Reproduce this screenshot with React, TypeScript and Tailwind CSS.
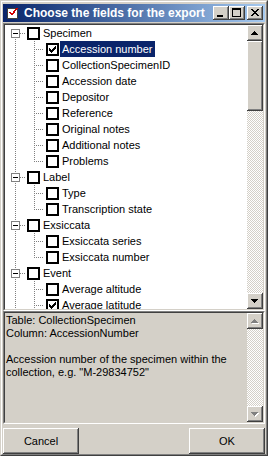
import React from "react";

const raised =
  "shadow-[inset_-1px_-1px_0_#404040,inset_1px_1px_0_#ffffff,inset_-2px_-2px_0_#808080,inset_2px_2px_0_#d4d0c8]";
const checker =
  "bg-[conic-gradient(#ffffff_25%,#d4d0c8_0_50%,#ffffff_0_75%,#d4d0c8_0)] bg-[length:2px_2px]";

type Leaf = { label: string; checked?: boolean; selected?: boolean };
type Node = { label: string; checked?: boolean; selected?: boolean; children: Leaf[] };

const tree: Node[] = [
  {
    label: "Specimen",
    children: [
      { label: "Accession number", checked: true, selected: true },
      { label: "CollectionSpecimenID" },
      { label: "Accession date" },
      { label: "Depositor" },
      { label: "Reference" },
      { label: "Original notes" },
      { label: "Additional notes" },
      { label: "Problems" },
    ],
  },
  { label: "Label", children: [{ label: "Type" }, { label: "Transcription state" }] },
  { label: "Exsiccata", children: [{ label: "Exsiccata series" }, { label: "Exsiccata number" }] },
  {
    label: "Event",
    children: [{ label: "Average altitude" }, { label: "Average latitude", checked: true }],
  },
];

const dot = { stroke: "#808080", strokeWidth: 1, strokeDasharray: "1 1" } as const;

function RootCell({ first }: { first: boolean }) {
  return (
    <svg width="19" height="16" className="shrink-0" shapeRendering="crispEdges">
      <line x1="9.5" y1={first ? 8 : 0} x2="9.5" y2="16" {...dot} />
      <line x1="14" y1="8.5" x2="19" y2="8.5" {...dot} />
      <rect x="5.5" y="4.5" width="8" height="8" fill="#ffffff" stroke="#808080" />
      <rect x="7" y="8" width="5" height="1" fill="#000000" />
    </svg>
  );
}

function ContCell() {
  return (
    <svg width="19" height="16" className="shrink-0" shapeRendering="crispEdges">
      <line x1="9.5" y1="0" x2="9.5" y2="16" {...dot} />
    </svg>
  );
}

function ChildCell({ last }: { last: boolean }) {
  return (
    <svg width="19" height="16" className="shrink-0" shapeRendering="crispEdges">
      <line x1="9.5" y1="0" x2="9.5" y2={last ? 9 : 16} {...dot} />
      <line x1="11" y1="8.5" x2="19" y2="8.5" {...dot} />
    </svg>
  );
}

function CheckBox({ checked }: { checked?: boolean }) {
  return (
    <div className="ml-[2px] w-[13px] h-[13px] shrink-0 border-2 border-black bg-white flex items-center justify-center">
      {checked && (
        <svg width="7" height="7" viewBox="0 0 7 7" shapeRendering="crispEdges">
          <path
            d="M6 0h1v1h-1z M5 1h2v1h-2z M0 2h1v1h-1z M4 2h3v1h-3z M0 3h2v1h-2z M3 3h3v1h-3z M0 4h5v1h-5z M1 5h3v1h-3z M2 6h1v1h-1z"
            fill="#000"
          />
        </svg>
      )}
    </div>
  );
}

function Label({ text, selected }: { text: string; selected?: boolean }) {
  return (
    <span
      className={
        selected
          ? "ml-[1px] px-[2px] h-[16px] leading-[16px] whitespace-nowrap bg-[#0a246a] text-white"
          : "ml-[1px] px-[2px] h-[16px] leading-[16px] whitespace-nowrap text-black"
      }
    >
      {text}
    </span>
  );
}

function Arrow({ dir, disabled }: { dir: "up" | "down"; disabled?: boolean }) {
  const up = "M3 0h1v1h-1z M2 1h3v1h-3z M1 2h5v1h-5z M0 3h7v1h-7z";
  const down = "M0 0h7v1h-7z M1 1h5v1h-5z M2 2h3v1h-3z M3 3h1v1h-1z";
  const d = dir === "up" ? up : down;
  return (
    <div className={`w-[16px] h-[16px] shrink-0 bg-[#d4d0c8] flex items-center justify-center ${raised}`}>
      <svg width="8" height="5" viewBox="0 0 8 5" shapeRendering="crispEdges">
        {disabled && <path d={d} fill="#ffffff" transform="translate(1 1)" />}
        <path d={d} fill={disabled ? "#808080" : "#000000"} />
      </svg>
    </div>
  );
}

function TitleButton({ kind }: { kind: "min" | "max" | "close" }) {
  return (
    <div className={`w-[16px] h-[14px] bg-[#d4d0c8] flex items-center justify-center ${raised}`}>
      <svg width="16" height="14" viewBox="0 0 16 14" shapeRendering="crispEdges">
        {kind === "min" && <rect x="4" y="9" width="6" height="2" fill="#000" />}
        {kind === "max" && (
          <path d="M3 2h9v9h-9z M4 4v6h7v-6z" fill="#000" fillRule="evenodd" />
        )}
        {kind === "close" && (
          <path
            d="M4 3h2v1h-2z M10 3h2v1h-2z M5 4h2v1h-2z M9 4h2v1h-2z M6 5h4v1h-4z M7 6h2v1h-2z M6 7h4v1h-4z M5 8h2v1h-2z M9 8h2v1h-2z M4 9h2v1h-2z M10 9h2v1h-2z"
            fill="#000"
          />
        )}
      </svg>
    </div>
  );
}

export default function App() {
  const rows: React.ReactNode[] = [];
  tree.forEach((r, ri) => {
    rows.push(
      <div key={`r${ri}`} className="flex items-center h-[16px] shrink-0">
        <RootCell first={ri === 0} />
        <CheckBox checked={r.checked} />
        <Label text={r.label} selected={r.selected} />
      </div>
    );
    r.children.forEach((c, ci) => {
      rows.push(
        <div key={`r${ri}c${ci}`} className="flex items-center h-[16px] shrink-0">
          <ContCell />
          <ChildCell last={ci === r.children.length - 1 && ri !== tree.length - 1} />
          <CheckBox checked={c.checked} />
          <Label text={c.label} selected={c.selected} />
        </div>
      );
    });
  });

  return (
    <div
      className="w-[268px] h-[456px] bg-[#d4d0c8] border border-t-[#d4d0c8] border-l-[#d4d0c8] border-r-[#404040] border-b-[#404040] text-[11px] text-black"
      style={{ fontFamily: '"Liberation Sans", Arial, sans-serif' }}
    >
      <div className="h-full border border-t-white border-l-white border-r-[#808080] border-b-[#808080] px-[1px] pt-[2px] pb-[1px] flex flex-col">
        {/* Title bar */}
        <div className="h-[18px] shrink-0 flex items-center bg-gradient-to-r from-[#0a246a] to-[#a6caf0] pl-[4px] pr-[2px]">
          <svg width="13" height="13" viewBox="0 0 13 13" shapeRendering="crispEdges" className="shrink-0">
            <rect x="0.5" y="1.5" width="10" height="10" fill="#ffffff" stroke="#404040" />
            <path
              d="M9 1h2v1h-2z M8 2h2v1h-2z M7 3h2v1h-2z M2 5h2v1h-2z M6 4h2v2h-2z M3 6h4v1h-4z M4 7h2v1h-2z M3 6h1v1h-1z"
              fill="#d40000"
            />
          </svg>
          <span className="ml-[4px] text-white font-bold text-[12px] whitespace-nowrap leading-[18px]">
            Choose the fields for the export
          </span>
          <div className="ml-auto flex items-center">
            <TitleButton kind="min" />
            <TitleButton kind="max" />
            <div className="w-[2px]" />
            <TitleButton kind="close" />
          </div>
        </div>

        {/* Tree */}
        <div className="mt-[1px] h-[288px] shrink-0 border border-t-[#808080] border-l-[#808080] border-b-white border-r-white">
          <div className="h-full border border-t-[#404040] border-l-[#404040] border-b-[#d4d0c8] border-r-[#d4d0c8] flex bg-white">
            <div className="flex-1 overflow-hidden pl-[1px] flex flex-col">{rows}</div>
            <div className="w-[16px] shrink-0 flex flex-col">
              <Arrow dir="up" />
              <div className={`h-[70px] shrink-0 bg-[#d4d0c8] ${raised}`} />
              <div className={`flex-1 ${checker}`} />
              <Arrow dir="down" />
            </div>
          </div>
        </div>

        {/* Memo */}
        <div className="h-[113px] shrink-0 border border-t-[#808080] border-l-[#808080] border-b-white border-r-white">
          <div className="h-full border border-t-[#404040] border-l-[#404040] border-b-[#d4d0c8] border-r-[#d4d0c8] flex">
            <div className="flex-1 pl-[1px] pt-[1px] leading-[13px] pr-[4px]">
              <div>Table: CollectionSpecimen</div>
              <div>Column: AccessionNumber</div>
              <div className="h-[13px]" />
              <div>Accession number of the specimen within the collection, e.g. "M-29834752"</div>
            </div>
            <div className="w-[16px] shrink-0 flex flex-col">
              <Arrow dir="up" disabled />
              <div className={`flex-1 ${checker}`} />
              <Arrow dir="down" disabled />
            </div>
          </div>
        </div>

        {/* Buttons */}
        <div className="mt-[4px] h-[26px] shrink-0 flex justify-between">
          <button className={`w-[76px] h-[26px] bg-[#d4d0c8] text-[11px] text-black ${raised}`}>Cancel</button>
          <button className={`w-[76px] h-[26px] bg-[#d4d0c8] text-[11px] text-black ${raised}`}>OK</button>
        </div>
      </div>
    </div>
  );
}
